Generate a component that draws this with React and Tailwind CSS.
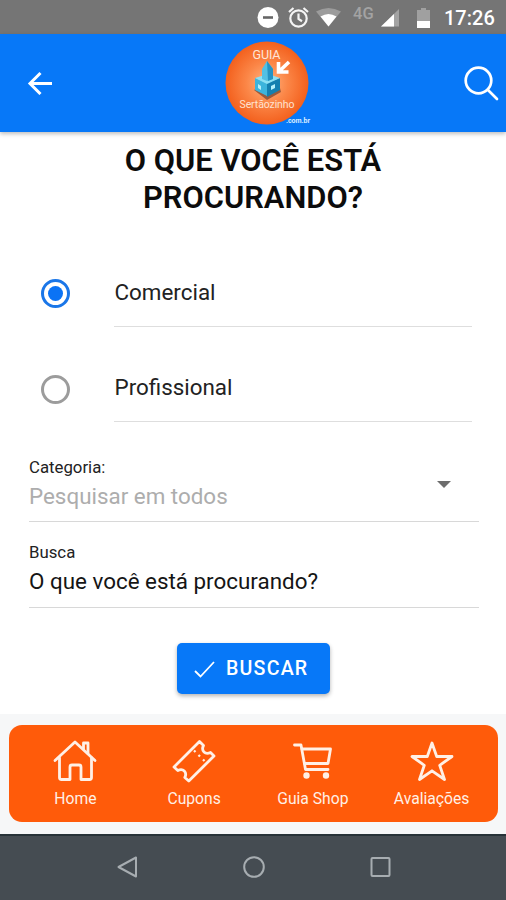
import React from "react";

const tabs = [
  { label: "Home", icon: HomeIcon },
  { label: "Cupons", icon: TicketIcon },
  { label: "Guia Shop", icon: CartIcon },
  { label: "Avaliações", icon: StarIcon },
];

function HomeIcon() {
  return (
    <svg className="h-11 w-11" viewBox="0 0 44 44" fill="none" stroke="currentColor" strokeWidth="2.8" strokeLinejoin="round" strokeLinecap="round">
      <path d="M2 21.5 22 3l20 18.5" />
      <path d="M6.500 19v19.500q0 2 2 2H17V28q0-2 2-2h7q2 0 2 2v12.500h8.500q2 0 2-2V19" />
      <path d="M30.500 10V4h4.500v10.500" />
    </svg>
  );
}

function TicketIcon() {
  return (
    <svg className="h-11 w-11" viewBox="0 0 44 44" fill="none" stroke="currentColor" strokeWidth="2.8" strokeLinejoin="round" strokeLinecap="round">
      <path d="M27.500 2.500 2 28l3.800 3.500c3-1.500 5-1 6.500.5s2 3.500.5 6.500l4 3.500L42 17l-3.500-3.500c-3 1.500-5 1-6.500-.5s-2-3.500-.500-6.500Z" />
      <path d="m22 11.500 1.500 1.500M26.500 16l1.500 1.500M31 20.500l1.500 1.500" strokeWidth="2.200" strokeLinecap="butt" />
    </svg>
  );
}

function CartIcon() {
  return (
    <svg className="h-11 w-11" viewBox="0 0 44 44" fill="none" stroke="currentColor" strokeWidth="2.8" strokeLinejoin="round" strokeLinecap="round">
      <path d="M3.500 6h6.500L14.500 30.500H37" />
      <path d="M11 10h28.500l-2.500 14.500H13.500" />
      <circle cx="15.500" cy="36.500" r="1.800" fill="currentColor" />
      <circle cx="35" cy="36.500" r="1.800" fill="currentColor" />
    </svg>
  );
}

function StarIcon() {
  return (
    <svg className="h-11 w-11" viewBox="0 0 44 44" fill="none" stroke="currentColor" strokeWidth="2.800" strokeLinejoin="round">
      <path d="m22 4 4.700 13.500H42L29.700 26.300 34.500 40.500 22 31.800 9.500 40.500l4.800-14.200L2 17.500h15.300Z" />
    </svg>
  );
}

function Logo() {
  return (
    <svg className="h-[86px] w-[88px]" viewBox="0 0 88 86" fontFamily="Roboto, sans-serif">
      <defs>
        <radialGradient id="orange">
          <stop offset="0" stopColor="#ffb583" />
          <stop offset="0.5" stopColor="#fb8647" />
          <stop offset="1" stopColor="#f3601d" />
        </radialGradient>
      </defs>
      <circle cx="43" cy="43" r="41.500" fill="url(#orange)" />
      <text x="42.500" y="19" fontSize="12.500" textLength="28" fill="#ffe6d8" textAnchor="middle">GUIA</text>
      {/* church */}
      <path d="m30 50 13 10 14-8-1-4-13-4Z" fill="#9b5a3c" />
      <path d="m31 38 12 5v13l-12-6Z" fill="#3db4dc" />
      <path d="m43 43 13-5v12l-13 7Z" fill="#1580b0" />
      <path d="m31 38 13-4 12 4-13 6Z" fill="#8be0f4" />
      <path d="m38 29 5-8 6 8v10l-6 2-5-2Z" fill="#53c0e4" />
      <path d="m43 21 6 8v10l-5 2Z" fill="#2493c5" />
      <path d="m34 44 3 2v4l-3-2ZM47 46l4-2v4l-4 2Z" fill="#b6f0fb" />
      <path d="M65 22 55.500 31M54.500 22v10h10" fill="none" stroke="#fff" strokeWidth="3.600" />
      <text x="43" y="68" fontSize="10.500" textLength="55" fill="#ffe1cf" textAnchor="middle">Sertãozinho</text>
      <text x="62" y="83" fontSize="7" fontWeight="700" textLength="24" fill="#d9ecff">.com.br</text>
    </svg>
  );
}

function StatusBar() {
  return (
    <div className="flex h-[34px] items-center bg-[#757575] pl-[257px] text-white">
      <svg className="h-[22px] w-[22px]" viewBox="0 0 22 22">
        <circle cx="11" cy="11.500" r="10.500" fill="#fff" />
        <path d="M6 11.500h10" stroke="#666" strokeWidth="2.600" />
      </svg>
      <svg className="ml-[9px] h-[22px] w-[21px]" viewBox="0 0 21 22" fill="none" stroke="#f4f4f4" strokeWidth="2.200">
        <circle cx="10.500" cy="12.500" r="8.200" />
        <path d="M10.500 7.500V13l3.500 2.200M1 6l4.500-4M20 6l-4.500-4" />
      </svg>
      <svg className="ml-[7px] h-5 w-[25px]" viewBox="0 0 25 20">
        <path d="M12.500 19.500 0 4.500Q12.500-2.500 25 4.500Z" fill="#9c9c9c" />
        <path d="M12.500 19.500 4.500 9.500q8-5 16 0Z" fill="#fff" />
      </svg>
      <span className="ml-[12px] -mt-[7px] w-[22px] text-[16.500px] leading-4 font-medium text-[#a3a3a3]">4G</span>
      <svg className="ml-[6px] mt-[2px] h-[18px] w-[18px]" viewBox="0 0 18 18">
        <path d="M0 17.500 18 0v17.500Z" fill="#a3a3a3" />
        <path d="M0 17.500 13 5v12.500Z" fill="#fff" />
      </svg>
      <svg className="ml-[18px] mt-[2px] h-5 w-[13px]" viewBox="0 0 13 20">
        <path d="M4 0h5v2h4v18H0V2h4Z" fill="#a0a0a0" />
        <path d="M0 13h13v7H0Z" fill="#fff" />
      </svg>
      <span className="ml-[14px] mt-[2px] text-[20px] leading-5 font-medium">17:26</span>
    </div>
  );
}

function RadioRow({ label, checked }) {
  return (
    <div className="flex h-[95.5px] items-start pl-[41px]">
      <span
        className={`mt-[48px] flex h-[29px] w-[29px] items-center justify-center rounded-full ${
          checked ? "border-3 border-[#1a76e8]" : "border-3 border-[#9c9c9c]"
        }`}
      >
        {checked && <span className="h-[15px] w-[15px] rounded-full bg-[#0b73f5]"></span>}
      </span>
      <div className="mr-[34px] ml-[44px] flex h-full flex-1 items-end border-b border-[#dedede] pb-[21px] pl-[0.500px] text-[22.400px] leading-[26px] text-[#222]">
        {label}
      </div>
    </div>
  );
}

const App = () => {
  return (
    <div className="flex h-[900px] w-[506px] flex-col overflow-hidden bg-white font-['Roboto',sans-serif]">
      <StatusBar />

      <header className="z-10 grid h-[98px] grid-cols-3 items-center bg-[#0778f8] shadow-[0_2px_4px_rgba(0,0,0,0.25)]">
        <button className="pl-[27px] text-white">
          <svg className="h-6 w-[26px]" viewBox="0 0 26 24" fill="none" stroke="currentColor" strokeWidth="3">
            <path d="M25 12.500H3M13.500 2 3 12.500 13.500 23" />
          </svg>
        </button>
        <div className="flex justify-center pl-[30px]">
          <Logo />
        </div>
        <button className="flex justify-end pr-[7px] text-white">
          <svg className="h-[36px] w-[36px]" viewBox="0 0 36 36" fill="none" stroke="currentColor" strokeWidth="2.700" strokeLinecap="round">
            <circle cx="15.500" cy="15.500" r="12.800" />
            <path d="m25 25 9 9" />
          </svg>
        </button>
      </header>

      <main className="flex h-[582px] flex-col">
        <h1 className="mt-[10px] h-[89px] px-[100px] text-center text-[30.900px] leading-[37px] font-semibold text-[#0c0c0c]">
          O QUE VOCÊ ESTÁ PROCURANDO?
        </h1>
        <RadioRow label="Comercial" checked />
        <RadioRow label="Profissional" />

        <div className="mr-[27px] ml-[29px] flex h-[100px] items-end justify-between border-b border-[#d8d8d8] pb-[12px]">
          <div>
            <p className="text-[16.800px] leading-[20px] text-[#222]">Categoria:</p>
            <p className="mt-[6px] text-[22.400px] leading-[26px] text-[#adadad]">Pesquisar em todos</p>
          </div>
          <svg className="mr-[28px] mb-[21px] h-[7px] w-[14px]" viewBox="0 0 14 7">
            <path d="M0 0h14L7 7Z" fill="#6d6d6d" />
          </svg>
        </div>
        <div className="mr-[27px] ml-[29px] flex h-[86px] flex-col justify-end border-b border-[#d8d8d8] pb-[13px]">
          <p className="text-[16.800px] leading-[20px] text-[#222]">Busca</p>
          <p className="mt-[6px] text-[22.400px] leading-[26px] text-[#151515]">O que você está procurando?</p>
        </div>

        <button className="mt-[35px] ml-[177px] flex h-[51px] w-[153px] items-center rounded-[5px] bg-[#0778f8] pl-[17px] text-white shadow-[0_2px_4px_rgba(0,0,0,0.3)]">
          <svg className="h-[18px] w-[21px]" viewBox="0 0 21 18" fill="none" stroke="currentColor" strokeWidth="1.800">
            <path d="m1 11 5.500 5.500L20 2" />
          </svg>
          <span className="ml-[11px] text-[19.600px] font-medium tracking-[1.200px]">BUSCAR</span>
        </button>
      </main>

      <footer className="h-[120px] bg-[#f6f7f8] pt-[11px] pr-[8px] pl-[9px]">
        <nav className="grid h-[97px] grid-cols-4 rounded-[13px] bg-[#ff5b0a] px-[7px] text-[#fff0e6]">
          {tabs.map(({ label, icon: Icon }) => (
            <a key={label} className="flex flex-col items-center pt-[14px]">
              <Icon />
              <span className="mt-[6px] text-[15.700px] leading-5">{label}</span>
            </a>
          ))}
        </nav>
      </footer>

      <div className="flex h-[66px] items-center justify-between border-t-2 border-[#273238] bg-[#454c52] pr-[114px] pb-[2px] pl-[115px]">
        <svg className="h-6 w-6" viewBox="0 0 24 24" fill="none" stroke="#a7adb1" strokeWidth="2" strokeLinejoin="round">
          <path d="M21 2.500v19L3.500 12Z" />
        </svg>
        <svg className="h-6 w-6" viewBox="0 0 24 24" fill="none" stroke="#a7adb1" strokeWidth="2">
          <circle cx="12" cy="12" r="9.800" />
        </svg>
        <svg className="h-6 w-6" viewBox="0 0 24 24" fill="none" stroke="#a7adb1" strokeWidth="2">
          <rect x="3.500" y="3" width="18" height="18" rx="1" />
        </svg>
      </div>
    </div>
  );
};

export default App;
